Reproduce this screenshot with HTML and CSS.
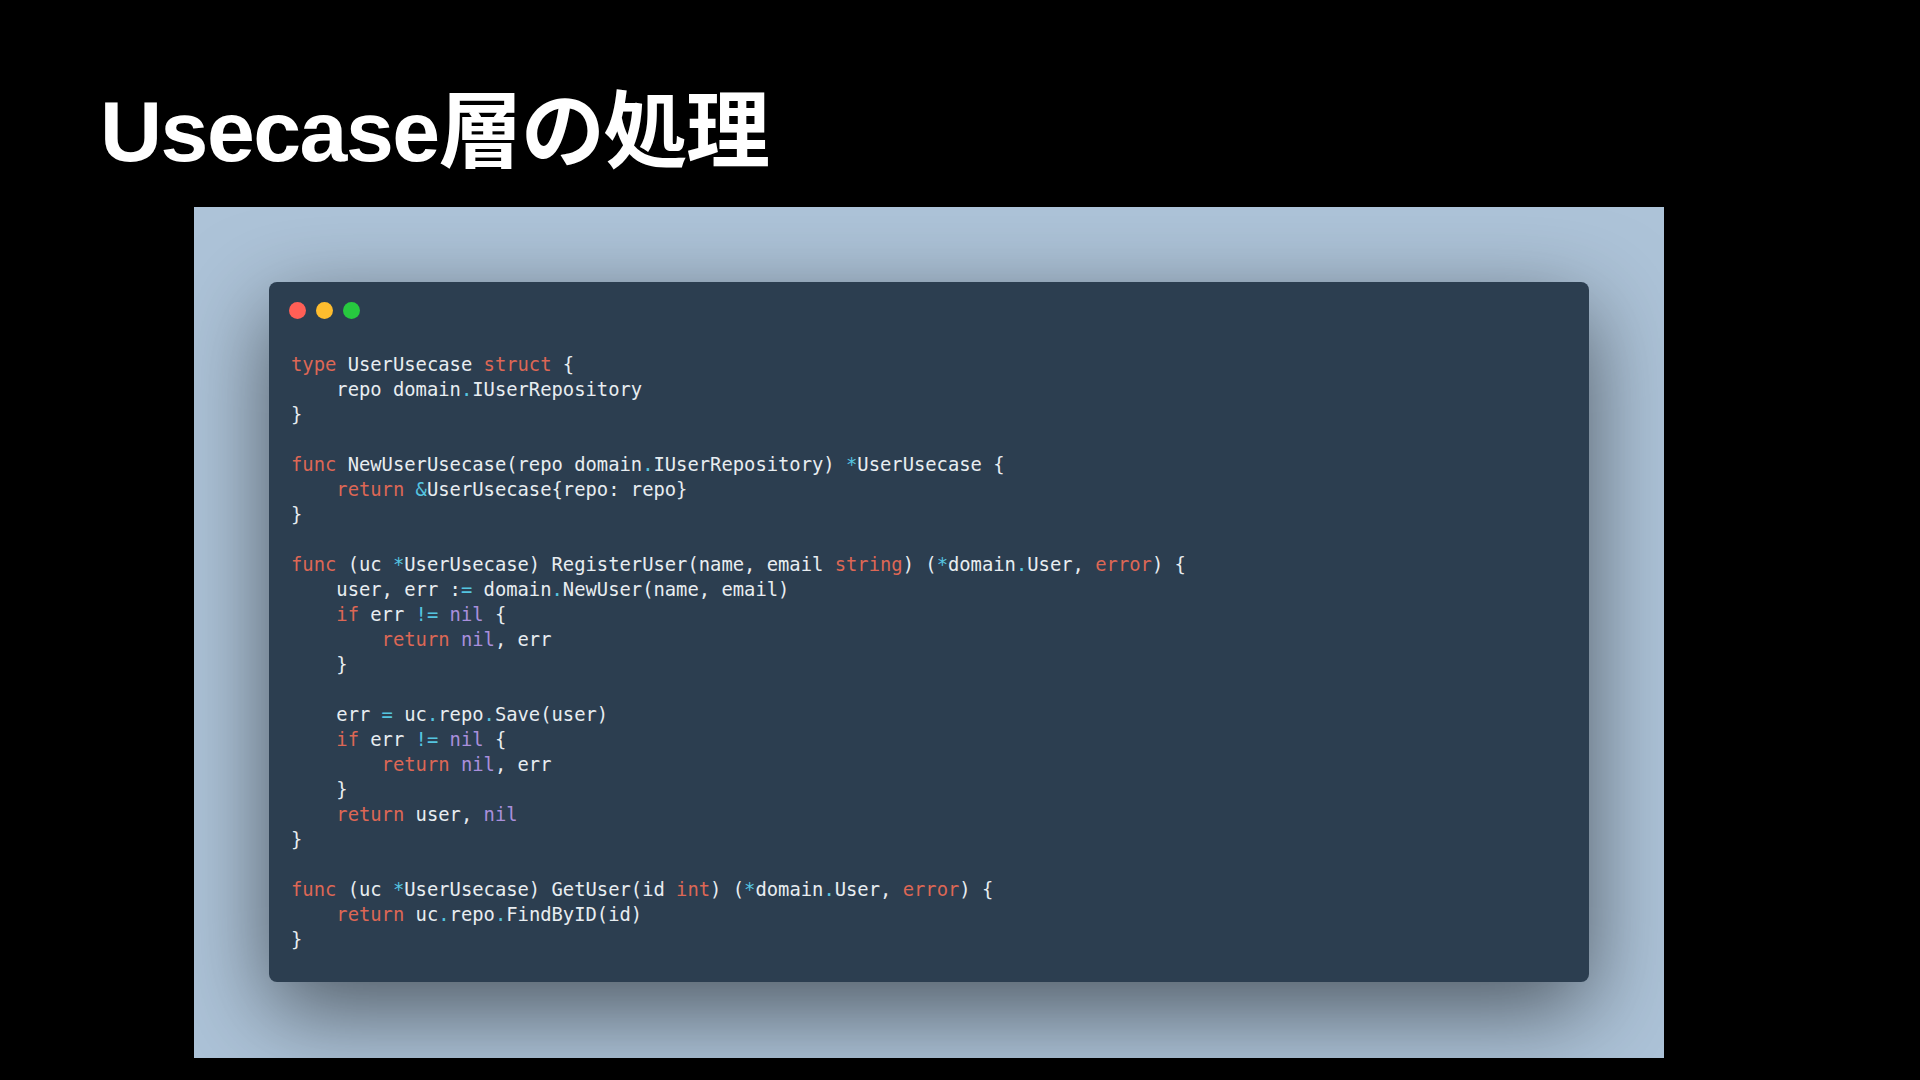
FILE: index.html
```html
<!DOCTYPE html>
<html lang="ja">
<head>
<meta charset="utf-8">
<title>Usecase層の処理</title>
<link rel="stylesheet" href="styles.css">
</head>
<body>
<main class="slide">
<h1 class="title">Usecase<span class="jp">層の処理</span></h1>
<section class="backdrop">
<div class="window">
<div class="dots"><span class="dot red"></span><span class="dot yellow"></span><span class="dot green"></span></div>
<code class="code">
<div class="line"><span class="k">type</span> UserUsecase <span class="k">struct</span> {</div>
<div class="line">    repo domain<span class="o">.</span>IUserRepository</div>
<div class="line">}</div>
<div class="line"></div>
<div class="line"><span class="k">func</span> NewUserUsecase(repo domain<span class="o">.</span>IUserRepository) <span class="o">*</span>UserUsecase {</div>
<div class="line">    <span class="k">return</span> <span class="o">&amp;</span>UserUsecase{repo: repo}</div>
<div class="line">}</div>
<div class="line"></div>
<div class="line"><span class="k">func</span> (uc <span class="o">*</span>UserUsecase) RegisterUser(name, email <span class="k">string</span>) (<span class="o">*</span>domain<span class="o">.</span>User, <span class="k">error</span>) {</div>
<div class="line">    user, err :<span class="o">=</span> domain<span class="o">.</span>NewUser(name, email)</div>
<div class="line">    <span class="k">if</span> err <span class="o">!=</span> <span class="n">nil</span> {</div>
<div class="line">        <span class="k">return</span> <span class="n">nil</span>, err</div>
<div class="line">    }</div>
<div class="line"></div>
<div class="line">    err <span class="o">=</span> uc<span class="o">.</span>repo<span class="o">.</span>Save(user)</div>
<div class="line">    <span class="k">if</span> err <span class="o">!=</span> <span class="n">nil</span> {</div>
<div class="line">        <span class="k">return</span> <span class="n">nil</span>, err</div>
<div class="line">    }</div>
<div class="line">    <span class="k">return</span> user, <span class="n">nil</span></div>
<div class="line">}</div>
<div class="line"></div>
<div class="line"><span class="k">func</span> (uc <span class="o">*</span>UserUsecase) GetUser(id <span class="k">int</span>) (<span class="o">*</span>domain<span class="o">.</span>User, <span class="k">error</span>) {</div>
<div class="line">    <span class="k">return</span> uc<span class="o">.</span>repo<span class="o">.</span>FindByID(id)</div>
<div class="line">}</div>
</code>
</div>
</section>
</main>
</body>
</html>
```
FILE: styles.css
```css
* { box-sizing: border-box; }
html, body { margin: 0; height: 100%; background: #000; overflow: hidden; }
.slide { width: 1920px; height: 1080px; background: #000; display: flex; flex-direction: column; padding-top: 75px; }
.title {
  margin: 0 0 0 100px;
  height: 131.5px;
  font: 700 86px/100px "Liberation Sans", "Noto Sans CJK JP", sans-serif;
  letter-spacing: -1.5px;
  color: #fff;
  white-space: nowrap;
}
.jp { font-family: "Noto Sans CJK JP", sans-serif; font-size: 84px; letter-spacing: -1.5px; }
.backdrop {
  margin-left: 194px;
  width: 1470px;
  height: 851px;
  padding: 75.5px 75px;
  background: #adc3d8;
  overflow: hidden;
}
.window {
  height: 700px;
  background: #2c3e50;
  border-radius: 8px;
  padding: 19.5px 19.5px;
  box-shadow: 0 28px 90px rgba(0, 0, 0, .55);
}
.dots { display: flex; gap: 10px; height: 17px; }
.dot { width: 17px; height: 17px; border-radius: 50%; }
.red { background: #ff5f56; }
.yellow { background: #ffbd2e; }
.green { background: #27c93f; }
.code {
  display: block;
  margin: 33px 0 0 2.5px;
  font: 400 18.82px/25px "DejaVu Sans Mono", monospace;
  color: #e8edf1;
}
.line { height: 25.02px; white-space: pre; }
.k { color: #dd6755; }
.o { color: #55c5e0; }
.n { color: #a98fdc; }
```
